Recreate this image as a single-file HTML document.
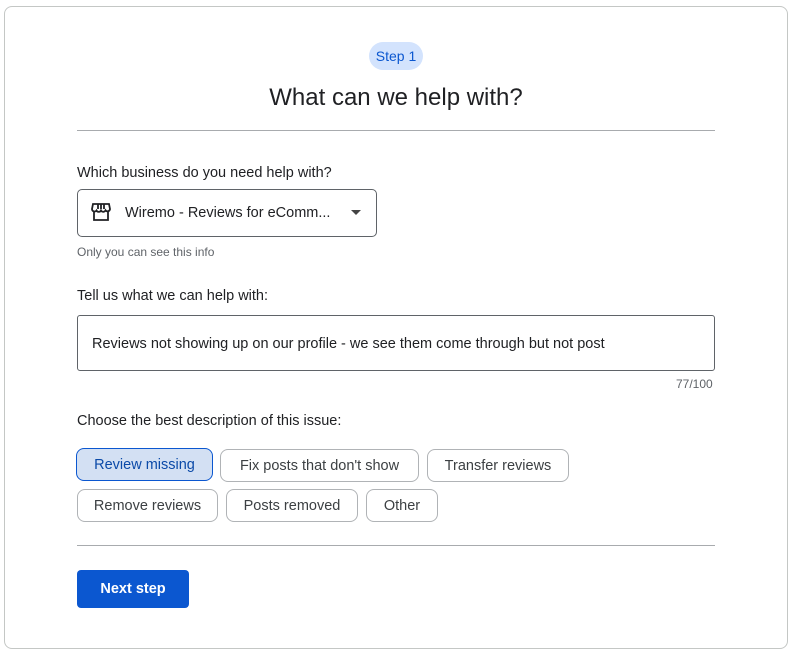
<!DOCTYPE html><html><head><style>
body{margin:0;width:792px;height:653px;background:#fff;font-family:"Liberation Sans",sans-serif;color:#202124;position:relative;overflow:hidden}
.a{position:absolute}
.card{left:4px;top:6px;width:782px;height:641px;border:1px solid #c4c7c5;border-radius:8px}
.chip{position:absolute;border:1px solid #b0b3b6;border-radius:8px;font-size:14.5px;color:#3c4043;line-height:33px;text-align:center;box-sizing:border-box;height:33px}
.hr{height:1px;background:#a8abae;left:77px;width:638px}
</style></head><body>
<div class="a card"></div>
<div class="a" style="left:369px;top:42px;width:54px;height:28px;border-radius:14px;background:#d3e3fd;color:#0b57d0;font-size:14px;line-height:28px;text-align:center">Step 1</div>
<div class="a" style="left:0;width:792px;top:84px;text-align:center;font-size:24px">What can we help with?</div>
<div class="a hr" style="top:130px"></div>
<div class="a" style="left:77px;top:165px;font-size:14.5px">Which business do you need help with?</div>
<div class="a" style="left:77px;top:189px;width:298px;height:46px;border:1px solid #5f6368;border-radius:5px"></div>
<svg class="a" style="left:91px;top:203px" width="20" height="18" viewBox="0 0 20 18"><path d="M2 1h16l1 5a2.5 2.5 0 0 1-4.5 1.3A2.5 2.5 0 0 1 10 7.5a2.5 2.5 0 0 1-4.5 0A2.5 2.5 0 0 1 1 6z M3 8v9h14V8 M7 1v5 M10 1v5 M13 1v5" fill="none" stroke="#202124" stroke-width="1.8"/></svg>
<div class="a" style="left:125px;top:205px;font-size:14.5px">Wiremo - Reviews for eComm...</div>
<div class="a" style="left:351px;top:210px;width:0;height:0;border-left:5px solid transparent;border-right:5px solid transparent;border-top:5px solid #444"></div>
<div class="a" style="left:77px;top:245px;font-size:12px;color:#5f6368">Only you can see this info</div>
<div class="a" style="left:77px;top:288px;font-size:14.5px">Tell us what we can help with:</div>
<div class="a" style="left:77px;top:315px;width:636px;height:54px;border:1px solid #5f6368;border-radius:3px"></div>
<div class="a" style="left:92px;top:336px;font-size:14.5px">Reviews not showing up on our profile - we see them come through but not post</div>
<div class="a" style="left:676px;top:377px;font-size:12px;color:#5f6368">77/100</div>
<div class="a" style="left:77px;top:413px;font-size:14.5px">Choose the best description of this issue:</div>
<div class="chip" style="left:76px;top:448px;width:137px;background:#d3e0f3;border-color:#0b57d0;color:#0b4aa8">Review missing</div>
<div class="chip" style="left:220px;top:449px;width:199px">Fix posts that don't show</div>
<div class="chip" style="left:427px;top:449px;width:142px">Transfer reviews</div>
<div class="chip" style="left:77px;top:489px;width:141px">Remove reviews</div>
<div class="chip" style="left:226px;top:489px;width:132px">Posts removed</div>
<div class="chip" style="left:366px;top:489px;width:72px">Other</div>
<div class="a hr" style="top:545px"></div>
<div class="a" style="left:77px;top:570px;width:112px;height:38px;background:#0b57d0;border-radius:4px;color:#fff;font-size:14.5px;font-weight:bold;line-height:38px;text-align:center">Next step</div>
</body></html>
